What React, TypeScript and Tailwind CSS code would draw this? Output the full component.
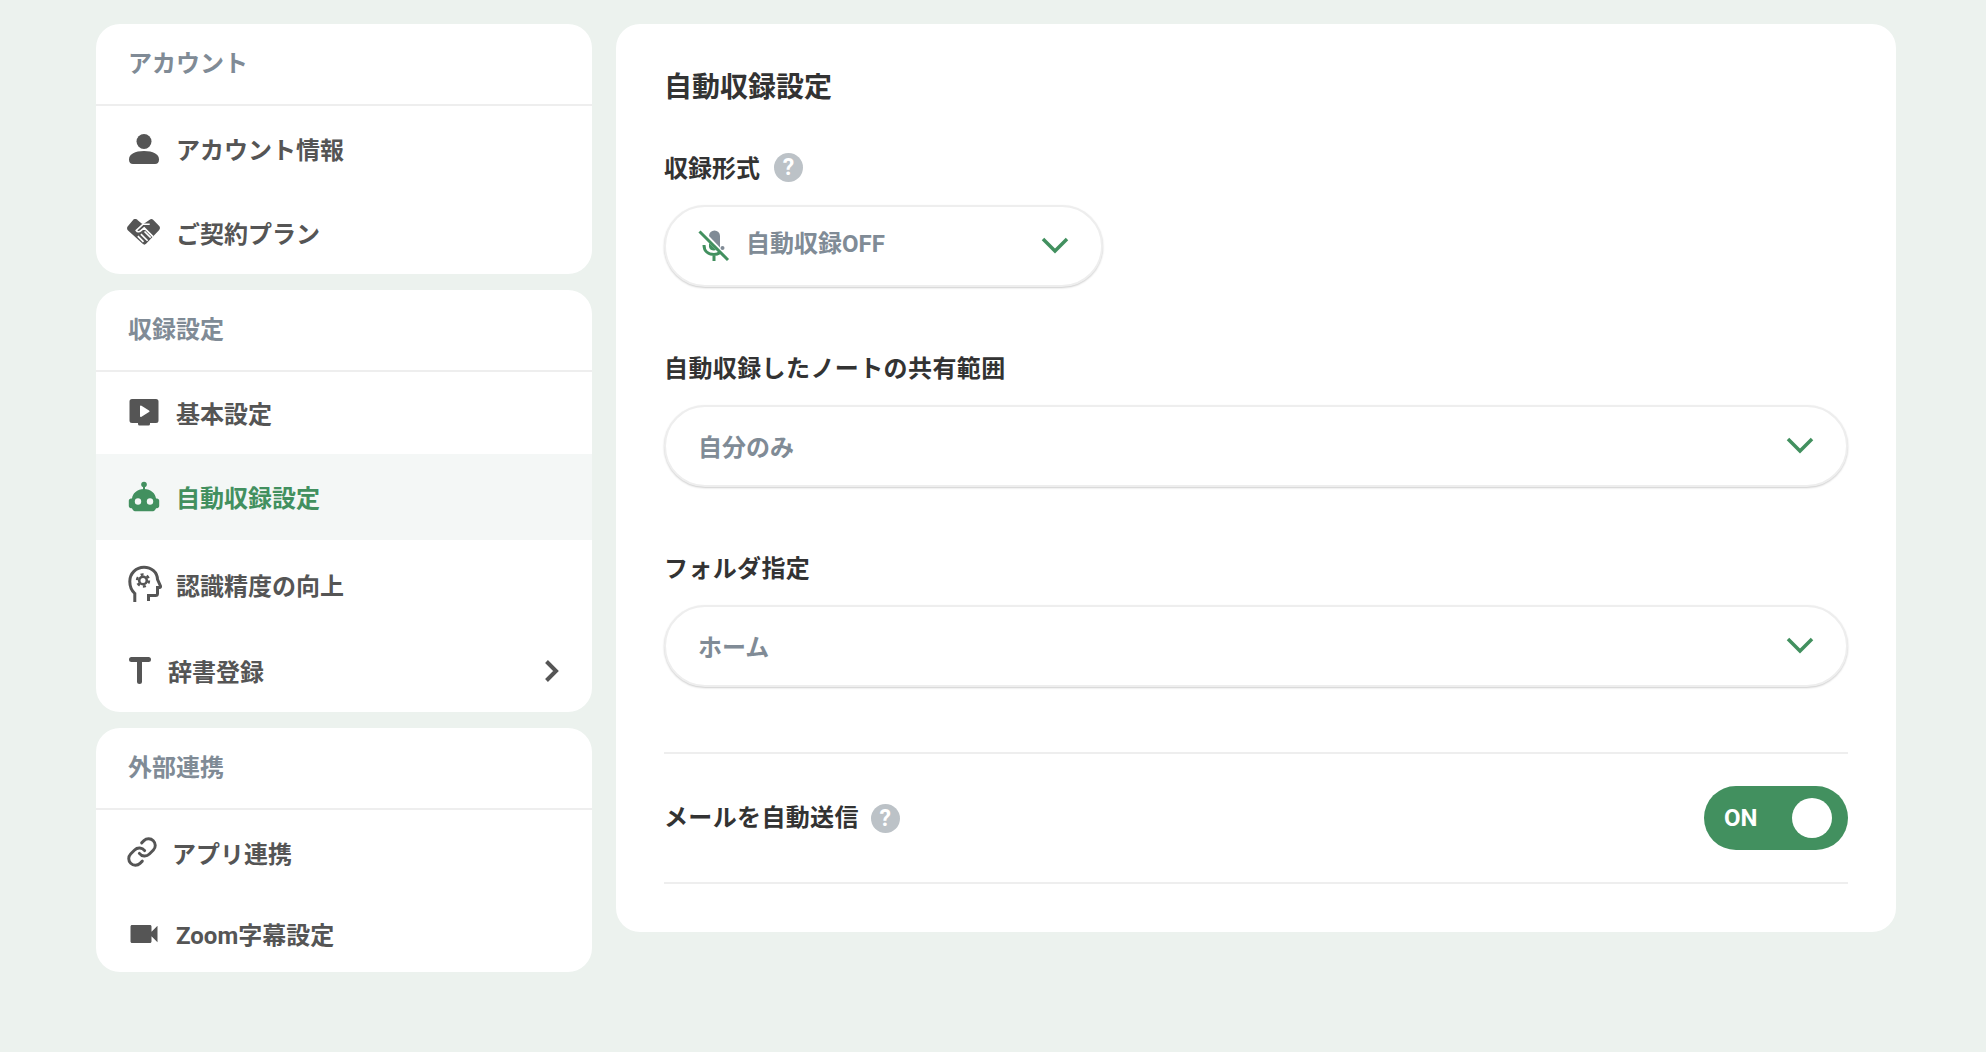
import React from "react";
import { MdVideocam } from "react-icons/md";
import { Link as LinkIcon } from "lucide-react";

const Person = () => (
  <svg viewBox="0 0 32 32" className="w-8 h-8 fill-[#555555] translate-y-px">
    <circle cx="16" cy="8.500" r="7.500" />
    <path d="M1 26.500C1 21 7 18 16 18s15 3 15 8.500c0 3-1.500 4.500-4 4.500H5c-2.500 0-4-1.500-4-4.500z" />
  </svg>
);
const Shake = () => (
  <svg viewBox="0 0 32 26" className="w-[33px] h-[28px] -ml-px" fill="none">
    <path fill="#555555" d="M8 0.500c1 0 1.600.3 2.400 1L14.500 5l1.500.2L22 1c1-.8 2.400-.8 3.300 0l5.700 6c1.300 1.300 1.300 3 0 4.200L18.500 24.500c-1 1-2.300 1-3.300 0L1 11.500C-.3 10.200-.3 8.500 1 7.200L5.700 1.500C6.400.8 7 .5 8 .5z" />
    <path stroke="#ffffff" strokeWidth="1.600" d="M22 5.500h-6.500L9 11.500c1 1.600 3 1.600 4.200.5l3.500-3 8.500 8.500M13.500 15l6.500 6.500M17 12.500l6 6M10.500 17l5.500 5.500" />
  </svg>
);
const Screen = () => (
  <svg viewBox="0 0 32 32" className="w-8 h-8">
    <path fill="#555555" d="M4 2h24a2.500 2.500 0 0 1 2.500 2.500v19A2.500 2.500 0 0 1 28 26h-6v1a1.500 1.500 0 0 1-1.500 1.500h-9A1.500 1.500 0 0 1 10 27v-1H4a2.500 2.500 0 0 1-2.500-2.500v-19A2.500 2.500 0 0 1 4 2z" />
    <path fill="#ffffff" d="M12 9.500v9.500a1 1 0 0 0 1.500.8l7.500-4.700a1 1 0 0 0 0-1.700L13.500 8.700A1 1 0 0 0 12 9.500z" />
  </svg>
);
const Robot = () => (
  <svg viewBox="0 0 32 32" className="w-8 h-8">
    <circle cx="16" cy="3.500" r="2.800" fill="#42905f" />
    <rect x="15" y="4" width="2" height="6" fill="#42905f" />
    <path fill="#42905f" d="M16 8c7 0 11.500 4.500 12 9.500h1c1.200 0 2.200 1 2.200 2.200v5.300c0 1.200-1 2.200-2.200 2.200h-1c-.4 1.500-1.700 3-3 3H7c-1.300 0-2.600-1.500-3-3H3c-1.200 0-2.200-1-2.200-2.200v-5.300c0-1.200 1-2.200 2.200-2.200h1C4.500 12.500 9 8 16 8z" />
    <circle cx="10" cy="20.500" r="3.200" fill="#f4f7f6" />
    <circle cx="22" cy="20.500" r="3.200" fill="#f4f7f6" />
  </svg>
);
const Head = () => (
  <svg viewBox="0 0 40 42" className="w-10 h-[42px] -mx-1" fill="none" stroke="#555555">
    <path strokeWidth="3" d="M10.800 39v-8.500C7.500 27.500 5.800 23 5.800 18.500 5.800 10.500 12 4.300 20 4.300c7.500 0 13.300 5 13.500 12.200l3 6.500c.3.800-.2 1.500-1 1.500h-2v6c0 1.200-.8 2-2 2H24.500V38" />
    <circle cx="19" cy="17.500" r="3.800" strokeWidth="2.600" />
    <circle cx="19" cy="17.500" r="6" strokeWidth="2.400" strokeDasharray="3 3.280" />
  </svg>
);
const TIcon = () => (
  <svg viewBox="0 0 24 28" className="w-6 h-7" fill="none" stroke="#555555" strokeWidth="5" strokeLinecap="round">
    <path d="M3.500 3.500h17M11.500 3.500v22" />
  </svg>
);
const Chevron = () => (
  <svg viewBox="0 0 28 18" className="w-7 h-[18px] -translate-y-px" fill="none" stroke="#42905f" strokeWidth="3.500">
    <path d="M2 3l12 12L26 3" />
  </svg>
);
const MicOff = () => (
  <svg viewBox="0 0 32 32" className="w-8 h-8" fill="none">
    <path fill="#808b96" d="M11 6a5.500 5.500 0 0 1 11 0v11.500z" />
    <circle cx="24.500" cy="18" r="2" fill="#808b96" />
    <path d="M6 15c0 6 4 9.500 10 9.500 2.500 0 4.500-.7 6-2M16 24.500V31" stroke="#42905f" strokeWidth="3" />
    <path d="M11 17c.5 2.500 2.500 3.500 5 3.500l2-.5-7-7z" fill="#42905f" />
    <path d="M1.500 1.500L30 30" stroke="#42905f" strokeWidth="3" />
  </svg>
);
const Help = () => (
  <span className="w-[29px] h-[29px] rounded-full bg-[#bcc2c7] flex items-center justify-center text-white text-[23px] leading-none font-bold">?</span>
);

function Item({ icon, label, active, chevron, h = "h-[84px]", textClass = "pt-[5px]" }: { icon: React.ReactNode; label: string; active?: boolean; chevron?: boolean; h?: string; textClass?: string }) {
  return (
    <div className={`flex items-center pl-8 pr-8 gap-4 ${h} ${active ? "bg-[#f4f7f6] text-[#42905f]" : "text-[#555555]"}`}>
      <span className="flex items-center shrink-0">{icon}</span>
      <span className={`flex-1 ${textClass}`}>{label}</span>
      {chevron && (
        <svg viewBox="0 0 16 24" className="w-4 h-6 translate-y-px" fill="none" stroke="#555555" strokeWidth="4">
          <path d="M2.500 2.500L12 12l-9.500 9.500" />
        </svg>
      )}
    </div>
  );
}

function Card({ title, children }: { title: string; children: React.ReactNode }) {
  return (
    <div className="bg-white rounded-3xl overflow-hidden">
      <div className="h-[82px] pl-8 pt-[22px] border-b-2 border-[#eeeeee] text-[#808b96] leading-9">{title}</div>
      {children}
    </div>
  );
}

function Select({ text, icon, width, textClass = "pt-[4px]" }: { text: string; icon?: React.ReactNode; width: string; textClass?: string }) {
  return (
    <div className={`${width} h-[82px] rounded-full bg-white border-2 border-[#eeeeee] shadow-[0_1px_2px_rgba(0,0,0,0.2)] flex items-center pl-8 pr-8 gap-4 text-[#808b96]`}>
      {icon}
      <span className={`flex-1 ${textClass}`}>{text}</span>
      <Chevron />
    </div>
  );
}

export default function App() {
  return (
    <div
      className="w-[1986px] h-[1052px] overflow-hidden bg-[#ecf2ee] flex items-start gap-6 pl-24 pt-6 text-2xl font-bold leading-9"
      style={{ fontFamily: 'Roboto, "Noto Sans CJK JP", "Noto Sans", sans-serif' }}
    >
      <div className="w-[496px] flex flex-col gap-4">
        <Card title="アカウント">
          <Item icon={<Person />} label="アカウント情報" />
          <Item icon={<Shake />} label="ご契約プラン" />
        </Card>
        <Card title="収録設定">
          <Item icon={<Screen />} label="基本設定" h="h-[82px]" textClass="pt-[3px]" />
          <Item icon={<Robot />} label="自動収録設定" active h="h-[86px]" textClass="pt-[3px]" />
          <Item icon={<Head />} label="認識精度の向上" h="h-[88px]" />
          <Item icon={<TIcon />} label="辞書登録" chevron />
        </Card>
        <Card title="外部連携">
          <Item icon={<LinkIcon size={32} color="#555555" strokeWidth={2.200} className="-mx-0.5" />} label="アプリ連携" />
          <Item icon={<MdVideocam size={36} color="#555555" className="-mx-0.5 translate-y-px" />} label="Zoom字幕設定" h="h-[78px]" />
        </Card>
      </div>

      <div className="w-[1280px] h-[908px] bg-white rounded-3xl px-12 pt-11 pb-12 text-[#333333]">
        <div className="text-[28px] leading-10 mb-[41px]">自動収録設定</div>

        <div className="flex items-center gap-3.5 h-9 mb-5">
          <span className="pt-[3px]">収録形式</span>
          <Help />
        </div>
        <Select width="w-[439px]" text="自動収録OFF" icon={<MicOff />} textClass="pb-1" />

        <div className="h-9 mt-16 mb-[18px] tracking-[0.4px]">自動収録したノートの共有範囲</div>
        <Select width="w-full" text="自分のみ" />

        <div className="h-9 mt-16 mb-[18px] tracking-[0.35px]">フォルダ指定</div>
        <Select width="w-full" text="ホーム" />

        <div className="mt-[65px] h-[132px] border-y-2 border-[#eeeeee] flex items-center">
          <span className="pb-[1px] tracking-[0.35px]">メールを自動送信</span>
          <span className="ml-3"><Help /></span>
          <div className="ml-auto w-36 h-16 rounded-full bg-[#42905f] flex items-center justify-between pl-5 pr-4 text-white font-bold leading-none">
            <span>ON</span>
            <span className="w-10 h-10 rounded-full bg-white" />
          </div>
        </div>
      </div>
    </div>
  );
}
